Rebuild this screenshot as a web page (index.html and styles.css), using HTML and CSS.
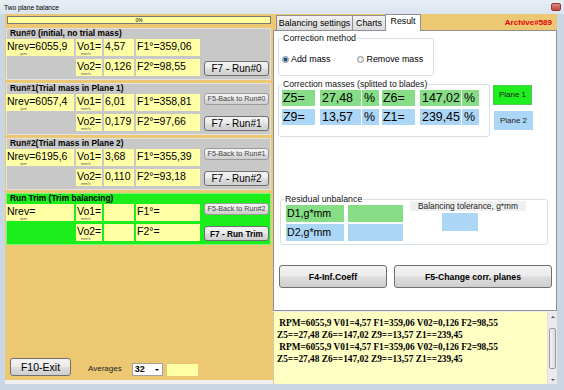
FILE: index.html
```html
<!DOCTYPE html>
<html>
<head>
<meta charset="utf-8">
<title>Two plane balance</title>
<link rel="stylesheet" href="styles.css">
</head>
<body>
<div class="win">
  <div class="titlebar"><span class="title">Two plane balance</span><span class="close"></span></div>
  <div class="client">
    <div class="left">
      <div class="progress">0%</div>

      <div class="group">
        <div class="ghead">Run#0 (initial, no trial mass)</div>
        <div class="grid">
          <div class="cell">Nrev=6055,9<span class="unit u-rpm">rpm</span></div>
          <div class="cell">Vo1=<span class="unit">mm/s</span></div>
          <div class="cell">4,57</div>
          <div class="cell">F1°=359,06</div>
          <div></div>
          <div></div>
          <div class="cell">Vo2=<span class="unit">mm/s</span></div>
          <div class="cell">0,126</div>
          <div class="cell">F2°=98,55</div>
          <button class="btn run">F7 - Run#0</button>
        </div>
      </div>

      <div class="group">
        <div class="ghead">Run#1(Trial mass in Plane 1)</div>
        <div class="grid">
          <div class="cell">Nrev=6057,4<span class="unit u-rpm">rpm</span></div>
          <div class="cell">Vo1=<span class="unit">mm/s</span></div>
          <div class="cell">6,01</div>
          <div class="cell">F1°=358,81</div>
          <button class="btn back">F5-Back to Run#0</button>
          <div></div>
          <div class="cell">Vo2=<span class="unit">mm/s</span></div>
          <div class="cell">0,179</div>
          <div class="cell">F2°=97,66</div>
          <button class="btn run">F7 - Run#1</button>
        </div>
      </div>

      <div class="group">
        <div class="ghead">Run#2(Trial mass in Plane 2)</div>
        <div class="grid">
          <div class="cell">Nrev=6195,6<span class="unit u-rpm">rpm</span></div>
          <div class="cell">Vo1=<span class="unit">mm/s</span></div>
          <div class="cell">3,68</div>
          <div class="cell">F1°=355,39</div>
          <button class="btn back">F5-Back to Run#1</button>
          <div></div>
          <div class="cell">Vo2=<span class="unit">mm/s</span></div>
          <div class="cell">0,110</div>
          <div class="cell">F2°=93,18</div>
          <button class="btn run">F7 - Run#2</button>
        </div>
      </div>

      <div class="group trim">
        <div class="ghead">Run Trim (Trim balancing)</div>
        <div class="grid">
          <div class="cell">Nrev=<span class="unit u-rpm">rpm</span></div>
          <div class="cell">Vo1=<span class="unit">mm/s</span></div>
          <div class="cell"></div>
          <div class="cell">F1°=</div>
          <button class="btn back">F5-Back to Run#2</button>
          <div></div>
          <div class="cell">Vo2=<span class="unit">mm/s</span></div>
          <div class="cell"></div>
          <div class="cell">F2°=</div>
          <button class="btn run bold">F7 - Run Trim</button>
        </div>
      </div>

      <div class="leftfoot">
        <button class="btn exit">F10-Exit</button>
        <span class="avg">Averages</span>
        <div class="combo">32<span class="arrow"></span></div>
        <div class="ybox"></div>
      </div>
    </div>

    <div class="right">
      <div class="tabstrip">
        <div class="tab t1">Balancing settings</div>
        <div class="tab t2">Charts</div>
        <div class="tab t3 active">Result</div>
        <div class="archive">Archive#589</div>
      </div>
      <div class="page">
        <fieldset class="gb method">
          <legend>Correction method</legend>
          <div class="radios">
            <span class="radio"><span class="rdot on"></span>Add mass</span>
            <span class="radio r2"><span class="rdot"></span>Remove mass</span>
          </div>
        </fieldset>

        <div class="massrow">
          <fieldset class="gb masses">
            <legend>Correction masses (splitted to blades)</legend>
            <div class="zrow green">
              <div class="z zl">Z5=</div><div class="z zv">27,48</div><div class="z zp">%</div>
              <div class="z zl">Z6=</div><div class="z zv">147,02</div><div class="z zp">%</div>
            </div>
            <div class="zrow blue">
              <div class="z zl">Z9=</div><div class="z zv">13,57</div><div class="z zp">%</div>
              <div class="z zl">Z1=</div><div class="z zv">239,45</div><div class="z zp">%</div>
            </div>
          </fieldset>
          <div class="planes">
            <div class="plane p1">Plane 1</div>
            <div class="plane p2">Plane 2</div>
          </div>
        </div>

        <fieldset class="gb resid">
          <legend>Residual unbalance</legend>
          <div class="rbody">
            <div class="dgrid">
              <div class="d green">D1,g*mm</div><div class="d dv green"></div>
              <div class="d blue">D2,g*mm</div><div class="d dv blue"></div>
            </div>
            <div class="tol">
              <div class="tollabel">Balancing tolerance, g*mm</div>
              <div class="tolbox"></div>
            </div>
          </div>
        </fieldset>

        <div class="btnrow">
          <button class="btn big b4">F4-Inf.Coeff</button>
          <button class="btn big b5">F5-Change corr. planes</button>
        </div>
      </div>
      <div class="log">
        <div class="logtext">
          <div class="ln"> RPM=6055,9 V01=4,57 F1=359,06 V02=0,126 F2=98,55</div>
          <div class="ln">Z5==27,48 Z6==147,02 Z9==13,57 Z1==239,45</div>
          <div class="ln"> RPM=6055,9 V01=4,57 F1=359,06 V02=0,126 F2=98,55</div>
          <div class="ln">Z5==27,48 Z6==147,02 Z9==13,57 Z1==239,45</div>
        </div>
        <div class="scroll">
          <div class="sbtn"><span class="up"></span></div>
          <div class="track"><div class="thumb"></div></div>
          <div class="sbtn"><span class="down"></span></div>
        </div>
      </div>
    </div>
  </div>
</div>
</body>
</html>
```

FILE: styles.css
```css
html, body {
  margin: 0;
  padding: 0;
}
body {
  width: 564px;
  height: 390px;
  overflow: hidden;
  background: #c9d6e6;
  font-family: "Liberation Sans", Arial, sans-serif;
  color: #000;
}
.win {
  display: flex;
  flex-direction: column;
  height: 390px;
}
.titlebar {
  height: 14px;
  display: flex;
  align-items: center;
  justify-content: space-between;
  padding: 0 3px 0 4px;
  font-size: 6.6px;
  background: linear-gradient(#e9eef5, #dbe4ef);
}
.close {
  width: 10px;
  height: 8px;
  border-radius: 2px;
  background: linear-gradient(#e08a80, #c2443a);
  border: 1px solid #8c3a34;
  box-sizing: border-box;
}
.client {
  display: flex;
  height: 370px;
  margin: 0 7px 0 5px;
  background: #f0f0f0;
}

/* ---------- left panel ---------- */
.left {
  width: 268px;
  height: 366px;
  background: #ecc872;
  display: flex;
  flex-direction: column;
}
.progress {
  margin: 2px 0 0 2px;
  width: 264px;
  height: 8px;
  box-sizing: border-box;
  border: 1px solid #7a7a7a;
  background: #ffff9c;
  font-size: 5px;
  line-height: 6px;
  text-align: center;
}
.group {
  margin: 3px 0 0 1px;
  width: 265px;
  height: 52px;
  box-sizing: border-box;
  background: #c8c8c8;
  border: 1px solid #e2e2e2;
}
.progress + .group {
  margin-top: 4px;
}
.group.trim {
  background: #1cee1c;
  border-color: #7cf57c;
}
.ghead {
  height: 10px;
  font-size: 8.4px;
  font-weight: bold;
  line-height: 8px;
  padding-left: 3px;
}
.grid {
  display: grid;
  grid-template-columns: 68px 26px 30px 64px 67px;
  grid-template-rows: 17px 17px;
  column-gap: 2px;
  row-gap: 3px;
  margin-left: -1px;
}
.cell {
  background: #ffffa6;
  font-size: 10.5px;
  line-height: 12px;
  padding: 1px 0 0 1px;
  white-space: nowrap;
}
.unit {
  display: block;
  font-size: 4px;
  line-height: 4px;
  color: #555;
  padding-left: 4px;
}
.unit.u-rpm {
  padding-left: 13px;
}
.btn {
  font-family: "Liberation Sans", Arial, sans-serif;
  border: 1px solid #707070;
  border-radius: 3px;
  background: linear-gradient(#f3f3f3 0%, #ebebeb 48%, #dddddd 52%, #cfcfcf 100%);
  color: #000;
  padding: 0;
  box-sizing: border-box;
  white-space: nowrap;
}
.btn.run {
  width: 65px;
  height: 15px;
  justify-self: end;
  align-self: end;
  font-size: 10px;
  line-height: 12px;
}
.btn.run.bold {
  font-weight: bold;
  font-size: 8.3px;
}
.btn.back {
  width: 65px;
  height: 12px;
  justify-self: end;
  align-self: start;
  margin-top: -1px;
  font-size: 7.2px;
  line-height: 10px;
  color: #444;
  border-color: #9a9a9a;
}
.leftfoot {
  margin-top: auto;
  display: flex;
  align-items: center;
  padding: 0 0 3px 5px;
  height: 20px;
}
.btn.exit {
  width: 61px;
  height: 18px;
  font-size: 10.5px;
}
.avg {
  font-size: 8px;
  margin-left: 17px;
  margin-top: 3px;
  color: #222;
}
.combo {
  margin-left: 10px;
  margin-top: 5px;
  width: 31px;
  height: 13px;
  box-sizing: border-box;
  background: #fff;
  border: 1px solid #a0a0a0;
  font-size: 9px;
  font-weight: bold;
  line-height: 11px;
  padding-left: 2px;
  display: flex;
  justify-content: space-between;
  align-items: center;
}
.arrow {
  width: 0;
  height: 0;
  border-left: 2px solid transparent;
  border-right: 2px solid transparent;
  border-top: 2px solid #000;
  margin-right: 3px;
}
.ybox {
  margin-left: 4px;
  margin-top: 5px;
  width: 31px;
  height: 12px;
  background: #ffffa6;
}

/* ---------- right panel ---------- */
.right {
  width: 284px;
  display: flex;
  flex-direction: column;
}
.tabstrip {
  height: 16px;
  background: #ecc872;
  display: flex;
  align-items: flex-end;
  padding-left: 3px;
}
.tab {
  height: 15px;
  box-sizing: border-box;
  border: 1px solid #8c8e94;
  border-bottom: none;
  background: linear-gradient(#f2f2f2, #e4e4e4 50%, #d9d9d9);
  font-size: 8.8px;
  line-height: 14px;
  text-align: center;
  margin-right: -1px;
  white-space: nowrap;
}
.t1 { width: 77px; }
.t2 { width: 34px; }
.t3 { width: 36px; }
.tab.active {
  height: 17px;
  margin-bottom: -1px;
  background: #fff;
  line-height: 13px;
  position: relative;
  z-index: 1;
}
.archive {
  margin-left: auto;
  margin-right: 5px;
  align-self: center;
  color: #e8000b;
  font-size: 8px;
  font-weight: bold;
}
.page {
  height: 281px;
  box-sizing: border-box;
  background: #fff;
  border: 1px solid #8e9095;
  padding: 2px 0 0 4px;
}
.gb {
  margin: 0;
  padding: 0 0 0 3px;
  border: 1px solid #d5dfe5;
  border-radius: 3px;
  box-sizing: border-box;
  min-width: 0;
}
.gb legend {
  padding: 0 1px;
  font-size: 8.9px;
  line-height: 10px;
  color: #111;
}
.method {
  width: 156px;
  height: 43px;
}
.radios {
  display: flex;
  align-items: center;
  margin-top: 11px;
  font-size: 8.9px;
  line-height: 10px;
}
.radio {
  display: flex;
  align-items: center;
}
.radio.r2 {
  margin-left: 27px;
}
.rdot {
  width: 7px;
  height: 7px;
  border-radius: 50%;
  box-sizing: border-box;
  border: 1px solid #8a8a8a;
  background: radial-gradient(#ffffff, #dcdcdc);
  margin-right: 2px;
}
.rdot.on {
  background: radial-gradient(circle, #1a4f7a 0 1.6px, #7fb0d8 2px, #e6eef5 3px);
}
.massrow {
  display: flex;
  margin-top: 3px;
}
.masses {
  width: 212px;
  height: 58px;
  padding-left: 3px;
}
.masses legend {
  font-size: 8.6px;
}
.zrow {
  display: flex;
  height: 16px;
  margin-top: 1px;
}
.zrow + .zrow {
  margin-top: 3px;
}
.z {
  font-size: 12.4px;
  line-height: 16px;
  padding-left: 1px;
  box-sizing: border-box;
}
.green .z, .d.green { background: #86dd86; }
.blue .z, .d.blue { background: #acd6f6; }
.zl { width: 33px; margin-right: 5px; }
.zv { width: 41px; margin-right: 1px; padding-left: 2px; }
.zp { width: 17px; margin-right: 3px; padding-left: 2px; }
.planes {
  display: flex;
  flex-direction: column;
  margin-left: 3px;
  margin-top: 6px;
}
.plane {
  width: 39px;
  font-size: 8px;
  text-align: center;
  color: #222;
}
.p1 {
  height: 20px;
  line-height: 18px;
  background: #1fee1f;
  border: 1px solid #58c458;
  box-sizing: border-box;
}
.p2 {
  height: 19px;
  line-height: 19px;
  margin-top: 6px;
  margin-left: 1px;
  background: #acd6f6;
}
.resid {
  width: 268px;
  height: 51px;
  margin: 57px 0 0 2px;
  padding-left: 3px;
}
.resid legend {
  font-size: 8.8px;
}
.rbody {
  display: flex;
  padding-left: 2px;
}
.dgrid {
  display: grid;
  grid-template-columns: 58px 55px;
  grid-template-rows: 17px 17px;
  column-gap: 4px;
  row-gap: 2px;
  margin-top: 1px;
}
.d {
  font-size: 10.6px;
  line-height: 17px;
  padding-left: 1px;
}
.tol {
  margin-left: 7px;
  margin-top: -3px;
  width: 116px;
  display: flex;
  flex-direction: column;
}
.tollabel {
  background: #efefef;
  font-size: 8.4px;
  line-height: 10px;
  text-align: center;
  color: #222;
}
.tolbox {
  width: 36px;
  height: 18px;
  margin: 2px 0 0 32px;
  background: #acd6f6;
}
.btnrow {
  display: flex;
  margin-top: 20px;
  margin-left: 1px;
}
.btn.big {
  height: 23px;
  font-weight: bold;
  font-size: 8.7px;
}
.b4 { width: 108px; }
.b5 { width: 158px; margin-left: 7px; }

/* ---------- log ---------- */
.log {
  margin-top: 1px;
  height: 72px;
  display: flex;
  background: #ffffc4;
  border-left: 1px solid #d8c9a0;
}
.logtext {
  flex: 1;
  padding: 5px 0 0 3px;
  font-family: "Liberation Serif", "Times New Roman", serif;
  font-weight: bold;
  font-size: 9.3px;
  line-height: 12px;
}
.ln {
  white-space: pre;
  height: 12px;
}
.scroll {
  width: 9px;
  display: flex;
  flex-direction: column;
  background: #eaeaea;
  border-left: 1px solid #e0e0e0;
}
.sbtn {
  height: 9px;
  display: flex;
  align-items: center;
  justify-content: center;
}
.up, .down {
  width: 0;
  height: 0;
  border-left: 2px solid transparent;
  border-right: 2px solid transparent;
}
.up { border-bottom: 2px solid #555; }
.down { border-top: 2px solid #555; }
.track {
  flex: 1;
  display: flex;
  flex-direction: column;
  justify-content: center;
}
.thumb {
  height: 39px;
  margin: 0 1px;
  border: 1px solid #9a9a9a;
  border-radius: 2px;
  background: linear-gradient(90deg, #f2f2f2, #dcdcdc);
}
```
